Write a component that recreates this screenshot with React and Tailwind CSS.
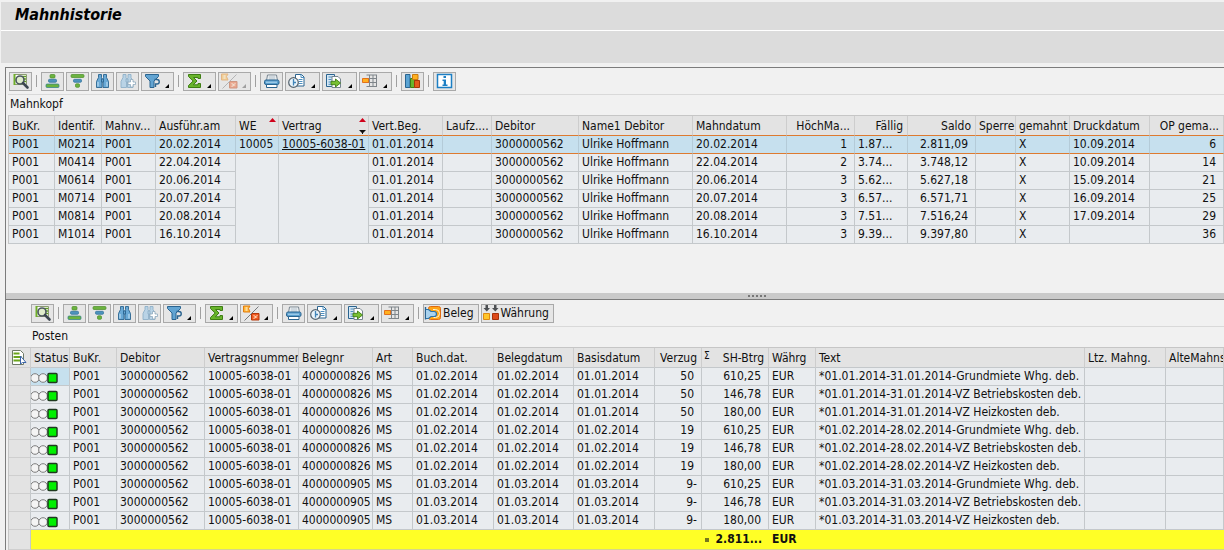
import clsx from "clsx";

const headers = [
  { label: "BuKr.", width: "w-[46px]" },
  { label: "Identif.", width: "w-[47px]" },
  { label: "Mahnv...", width: "w-[54px]" },
  { label: "Ausführ.am", width: "w-[80px]" },
  { label: "WE", width: "w-[43px]", sort: "up" },
  { label: "Vertrag", width: "w-[90px]", sort: "both" },
  { label: "Vert.Beg.", width: "w-[74px]" },
  { label: "Laufz....", width: "w-[49px]" },
  { label: "Debitor", width: "w-[87px]" },
  { label: "Name1 Debitor", width: "w-[114px]" },
  { label: "Mahndatum", width: "w-[94px]" },
  { label: "HöchMa...", width: "w-[68px]", right: true },
  { label: "Fällig", width: "w-[53px]", right: true },
  { label: "Saldo", width: "w-[68px]", right: true },
  { label: "Sperre", width: "w-[40px]" },
  { label: "gemahnt", width: "w-[54px]" },
  { label: "Druckdatum", width: "w-[80px]" },
  { label: "OP gema...", width: "w-auto", right: true },
];

const dunnings = [
  { id: "M0214", date: "20.02.2014", level: 1, due: "1.87...", saldo: "2.811,09", printed: "10.09.2014", items: 6 },
  { id: "M0414", date: "22.04.2014", level: 2, due: "3.74...", saldo: "3.748,12", printed: "10.09.2014", items: 14 },
  { id: "M0614", date: "20.06.2014", level: 3, due: "5.62...", saldo: "5.627,18", printed: "15.09.2014", items: 21 },
  { id: "M0714", date: "20.07.2014", level: 3, due: "6.57...", saldo: "6.571,71", printed: "16.09.2014", items: 25 },
  { id: "M0814", date: "20.08.2014", level: 3, due: "7.51...", saldo: "7.516,24", printed: "17.09.2014", items: 29 },
  { id: "M1014", date: "16.10.2014", level: 3, due: "9.39...", saldo: "9.397,80", printed: "", items: 36 },
];

const itemHeaders = [
  { label: "Status", width: "w-[39px]" },
  { label: "BuKr.", width: "w-[47px]" },
  { label: "Debitor", width: "w-[88px]" },
  { label: "Vertragsnummer", width: "w-[94px]" },
  { label: "Belegnr", width: "w-[74px]" },
  { label: "Art", width: "w-[40px]" },
  { label: "Buch.dat.", width: "w-[81px]" },
  { label: "Belegdatum", width: "w-[80px]" },
  { label: "Basisdatum", width: "w-[81px]" },
  { label: "Verzug", width: "w-[47px]", right: true },
  { label: "SH-Btrg", width: "w-[67px]", right: true, sum: true },
  { label: "Währg", width: "w-[47px]" },
  { label: "Text", width: "w-[269px]" },
  { label: "Ltz. Mahng.", width: "w-[81px]" },
  { label: "AlteMahnst", width: "w-auto" },
];

const months = [
  { doc: "4000000826", posted: "01.02.2014", base: "01.01.2014", delay: "50", period: "*01.01.2014-31.01.2014" },
  { doc: "4000000826", posted: "01.02.2014", base: "01.02.2014", delay: "19", period: "*01.02.2014-28.02.2014" },
  { doc: "4000000905", posted: "01.03.2014", base: "01.03.2014", delay: "9-", period: "*01.03.2014-31.03.2014" },
];

const charges = [
  { amount: "610,25", text: "Grundmiete Whg. deb." },
  { amount: "146,78", text: "VZ Betriebskosten deb." },
  { amount: "180,00", text: "VZ Heizkosten deb." },
];

const items = months.flatMap((month) => charges.map((charge) => ({ ...month, ...charge })));

const icons = {
  details: (
    <>
      <path d="M4.5 1.5h12v10h-12z" fill="#fff" stroke="#8a9a70" />
      <path d="M12 3.5h4M13 6h3M13 8.5h3" stroke="#5fa01e" strokeWidth="1.6" />
      <path d="M4.5 1v11" stroke="#6fae2a" strokeWidth="2" />
      <circle cx="10" cy="7" r="4" fill="#dfeccb" stroke="#4b5660" strokeWidth="1.6" />
      <path d="M13 10l4.5 4.5" stroke="#3c4650" strokeWidth="2.6" strokeLinecap="round" />
    </>
  ),
  sortUp: (
    <>
      <rect x="8" y="1.5" width="5" height="3.5" rx="1" fill="#6cb33f" stroke="#4a8c2a" strokeWidth=".7" />
      <rect x="6.5" y="6.3" width="8" height="3" rx="1" fill="#4d93bd" stroke="#2d6f99" strokeWidth=".7" />
      <rect x="4" y="11" width="13" height="3.5" rx="1" fill="#6cb33f" stroke="#2d7d8c" strokeWidth=".7" />
    </>
  ),
  sortDown: (
    <>
      <rect x="4" y="1.5" width="13" height="3" rx="1" fill="#6cb33f" stroke="#4a8c2a" strokeWidth=".7" />
      <rect x="6.5" y="6.3" width="8" height="3" rx="1" fill="#4d93bd" stroke="#2d6f99" strokeWidth=".7" />
      <rect x="8.5" y="10.8" width="4" height="3.5" rx="1" fill="#6cb33f" stroke="#4a8c2a" strokeWidth=".7" />
    </>
  ),
  find: (
    <g stroke="#2a6490" strokeWidth=".9" fill="#69a9d6">
      <path d="M6.500 1.500h3v3l.5 1.500v8.500h-5.500v-6l2-4z" />
      <path d="M11.500 1.500h3v3l2 4v6h-5.500v-8.500l.5-1.500z" />
      <path d="M9.500 6h2v3h-2z" />
      <path d="M6 9v4.500M15 9v4.500" stroke="#b9dcf2" strokeWidth="1.2" />
    </g>
  ),
  findNext: (
    <>
      <g stroke="#8fb0c8" strokeWidth=".9" fill="#b9d3e6">
        <path d="M6 1.500h3v3l.5 1.500v8.500h-5.500v-6l2-4z" />
        <path d="M11 1.500h3v3l2 4v6h-5.500v-8.500l.5-1.500z" />
        <path d="M9 6h2v3h-2z" />
      </g>
      <path d="M13.500 6.500h2.500v2.500h2.500v2.500h-2.500v2.500h-2.500v-2.500h-2.500v-2.500h2.500z" fill="#fff" stroke="#8fa9bd" strokeWidth=".8" />
    </>
  ),
  filter: (
    <>
      <path d="M3.500 1.500h13v2l-4.500 4.500v6.500h-4v-6.500l-4.500-4.500z" fill="#62a4d2" stroke="#2a6490" />
      <path d="M12.500 6.500h2.500a2 2 0 010 4.500h-1.500v3" fill="none" stroke="#2a6490" strokeWidth="1.4" />
    </>
  ),
  sum: (
    <path d="M4.500 1.500h12v4h-2.500v-1h-4.500l3.500 3.500-3.700 3.800h4.700v-1.300h2.500v4h-12v-2l4.700-4.500-4.700-4.500z" fill="#69b52c" stroke="#3e7d14" />
  ),
  subtotal: (
    <>
      <path d="M2.500 1h6.500l-1.500 2.500 1.500 3.500h-6.500z" fill="#ffb534" stroke="#e07c10" />
      <path d="M4.500 3h2M4.500 5h2" stroke="#fff" strokeWidth="1.1" />
      <path d="M10.500 8.500h7.500v6.500h-7.500z" fill="#f05a22" stroke="#b5380b" />
      <path d="M12.500 10.500l3 1.500-3 1.500M15.500 10.500h1" stroke="#ffd9b8" strokeWidth="1.1" />
      <path d="M3.500 15.500L17.500 1.500" stroke="#77797c" />
    </>
  ),
  print: (
    <>
      <path d="M6.500 2h9l1 6h-11z" fill="#fff" stroke="#76848f" />
      <path d="M7.500 4h7M7.500 6h7" stroke="#9fb0bd" />
      <rect x="3.500" y="7" width="14.500" height="4.500" rx="1.500" fill="#5a9fce" stroke="#2a6490" />
      <path d="M5.500 11.500h10.500v3h-10.500z" fill="#fff" stroke="#2a6490" />
      <path d="M5 9.200h11" stroke="#b9dcf2" />
    </>
  ),
  views: (
    <>
      <path d="M9.500 1.500h6l2.500 2.500v9h-8.500z" fill="#fff" stroke="#2a6490" />
      <path d="M15 1.500v3h3M12.500 6.500h4M12.500 8.500h4M12.500 10.500h4" fill="none" stroke="#4d8fc0" />
      <circle cx="7.500" cy="9.500" r="4.800" fill="#e9f3fa" stroke="#55636e" strokeWidth="1.2" />
      <path d="M7.500 6v6.500M7.500 9.500h2.500" stroke="#3f84b8" strokeWidth="1.3" />
    </>
  ),
  exportFile: (
    <>
      <path d="M3.500 1.500h8v12h-8z" fill="#d5e7f4" stroke="#2a6490" />
      <path d="M5.500 4h4M5.500 6.500h3M5.500 9h3M5.500 11.300h3" stroke="#4d8fc0" />
      <path d="M9 3.500h6l2.500 2.500v8.500h-8.500z" fill="#fff" stroke="#76848f" />
      <path d="M8 8.300h4.500v-2.300l5 4-5 4v-2.300h-4.500z" fill="#78c032" stroke="#3e7d14" strokeWidth=".9" />
    </>
  ),
  layout: (
    <>
      <path d="M6.500 2h10.500M6.500 5.500h10.500M6.500 9.500h10.500M6.500 13.500h10.500M9.500 2v12M13 2v12M16.500 2v12" stroke="#7f858a" />
      <path d="M2.500 5.500h6v4h-6z" fill="#ffb01f" stroke="#e3701a" />
    </>
  ),
  chart: (
    <>
      <path d="M3.500 1.500h4.500v13h-4.500z" fill="#5aa3d3" stroke="#2a6490" />
      <path d="M8.500 5.500h4v9h-4z" fill="#69b52c" stroke="#3e7d14" />
      <path d="M10.500 1.500h5.500v5h-5.500z" fill="#ffb01f" stroke="#c97a10" />
      <path d="M12.500 7.500h5v7h-5z" fill="#e35b1c" stroke="#a83808" />
    </>
  ),
  info: (
    <>
      <path d="M3.500 1.500h14v13h-14z" fill="#fff" stroke="#1d7fc4" strokeWidth="1.5" />
      <path d="M9.500 3h2.500v2h-2.500zM8.500 6.500h3.500v5h1.500v1.500h-5v-1.500h1.200v-3.500h-1.200z" fill="#1d7fc4" />
    </>
  ),
  document: (
    <>
      <rect x="4.500" y="1.500" width="12" height="13" rx="2" fill="#ffa516" stroke="#e06a10" />
      <path d="M1.500 2v12.500" stroke="#2a6490" strokeWidth="1.4" />
      <path d="M2 4.500h2.500l2.500 2h3a2.500 2.500 0 010 5h-3l-2.500 2h-2.500" fill="#a9d2ee" stroke="#2a73ab" strokeWidth="1.2" />
      <path d="M9 4.500h2.500a3.500 3.500 0 010 8h-2" fill="none" stroke="#fff2d0" />
    </>
  ),
  currency: (
    <>
      <path d="M3.500 0h2.500v3h2l-3.200 3.500-3.300-3.500h2zM12 0h2.500v3h2l-3.200 3.500-3.300-3.500h2z" fill="#4c4f52" />
      <path d="M1.500 8.500h6v6h-6z" fill="#ffc52b" stroke="#e08a10" />
      <path d="M10.500 8.500h6v6h-6z" fill="#dd4a1a" stroke="#a5300a" />
    </>
  ),
};

function Icon({ name }) {
  return (
    <svg className="w-[21px] h-[17px] shrink-0" viewBox="0 0 21 17" fill="none" aria-hidden="true">
      {icons[name]}
    </svg>
  );
}

function ToolButton({ icon, label, text, menu, wide, disabled }) {
  return (
    <button
      type="button"
      aria-label={label}
      disabled={disabled}
      className={clsx(
        "relative flex items-center h-[19px] border border-[#a9a9a9] bg-[#e6e6e6]",
        !menu && !text && "w-[23px]",
        menu && (wide ? "w-[35px]" : "w-[33px]"),
        text && "pr-1"
      )}
    >
      <span className={clsx("flex", disabled && "opacity-45")}>
        <Icon name={icon} />
      </span>
      {text && <span className="-ml-0.5 whitespace-nowrap">{text}</span>}
      {menu && (
        <svg className={clsx("absolute right-1 bottom-0.5 size-1", disabled && "opacity-30")} viewBox="0 0 4 4" aria-hidden="true">
          <path d="M4 0v4H0z" fill="#000" />
        </svg>
      )}
    </button>
  );
}

function Separator() {
  return (
    <span className="flex justify-center w-[5px]">
      <span className="w-px h-3 bg-[#a0a0a0]" />
    </span>
  );
}

function Toolbar({ subtotalOff, className, children }) {
  return (
    <div className={clsx("flex items-center gap-0.5 h-[27px] border-b border-[#d9d9d9]", className)}>
      <ToolButton icon="details" label="Details" />
      <Separator />
      <ToolButton icon="sortUp" label="Aufsteigend sortieren" />
      <ToolButton icon="sortDown" label="Absteigend sortieren" />
      <ToolButton icon="find" label="Suchen" />
      <ToolButton icon="findNext" label="Weitersuchen" />
      <ToolButton icon="filter" label="Filter" menu />
      <Separator />
      <ToolButton icon="sum" label="Summe" menu />
      <ToolButton icon="subtotal" label="Zwischensumme" menu disabled={subtotalOff} />
      <Separator />
      <ToolButton icon="print" label="Drucken" />
      <ToolButton icon="views" label="Sichten" menu wide />
      <ToolButton icon="exportFile" label="Exportieren" menu wide />
      <ToolButton icon="layout" label="Layout" menu />
      <Separator />
      {children}
    </div>
  );
}

function HeadCell({ col, line }) {
  return (
    <th
      scope="col"
      className={clsx(
        "relative h-5 pt-px border-r border-r-[#cdcdcd] border-b bg-[#e3e3e3] font-normal overflow-hidden",
        line,
        col.right ? "pr-1 text-right" : "pl-[3px] text-left"
      )}
    >
      {col.sum && <span className="absolute left-0.5 top-0.5 text-[10px] leading-3">Σ</span>}
      {col.label}
      {col.sort && (
        <svg className="absolute right-0.5 top-0.5 w-[7px] h-4" viewBox="0 0 7 16" aria-hidden="true">
          <path d="M3.500 0L7 4H0z" fill="#d0021b" />
          {col.sort === "both" && <path d="M0 12h7L4 15v1H3v-1z" fill="#111" />}
        </svg>
      )}
    </th>
  );
}

function Cell({ children, right, className, ...rest }) {
  return (
    <td className={clsx("h-[18px] border-r border-b", right ? "pr-[7px] text-right" : "pl-[3px]", className)} {...rest}>
      {children}
    </td>
  );
}

function DunningTable() {
  return (
    <table className="w-full table-fixed border-separate border-spacing-0 border-t border-l border-[#c6c6c6] whitespace-nowrap">
      <colgroup>
        {headers.map((col) => (
          <col key={col.label} className={col.width} />
        ))}
      </colgroup>
      <thead>
        <tr>
          {headers.map((col) => (
            <HeadCell key={col.label} col={col} line="border-b-[#dd7a30]" />
          ))}
        </tr>
      </thead>
      <tbody>
        {dunnings.map((row, i) => {
          const look =
            i === 0 ? "bg-[#c6e0ee] border-r-[#b4cbd8] border-b-[#dd7a30]" : "bg-[#e9ecef] border-[#c4c8cb]";
          return (
            <tr key={row.id}>
              <Cell className={look}>P001</Cell>
              <Cell className={look}>{row.id}</Cell>
              <Cell className={look}>P001</Cell>
              <Cell className={look}>{row.date}</Cell>
              {i === 0 && (
                <>
                  <Cell className={look}>10005</Cell>
                  <Cell className={look}>
                    <a href="#vertrag" className="underline">10005-6038-01</a>
                  </Cell>
                </>
              )}
              {i === 1 && (
                <>
                  <Cell className={look} rowSpan={5} />
                  <Cell className={look} rowSpan={5} />
                </>
              )}
              <Cell className={look}>01.01.2014</Cell>
              <Cell className={look} />
              <Cell className={look}>3000000562</Cell>
              <Cell className={look}>Ulrike Hoffmann</Cell>
              <Cell className={look}>{row.date}</Cell>
              <Cell className={look} right>{row.level}</Cell>
              <Cell className={look}>{row.due}</Cell>
              <Cell className={look} right>{row.saldo}</Cell>
              <Cell className={look} />
              <Cell className={look}>X</Cell>
              <Cell className={look}>{row.printed}</Cell>
              <Cell className={look} right>{row.items}</Cell>
            </tr>
          );
        })}
      </tbody>
    </table>
  );
}

function TrafficLight() {
  return (
    <svg className="block w-[27px] h-4" viewBox="0 0 27 16" role="img" aria-label="Grün">
      <circle cx="4" cy="9" r="4.300" fill="#f4f4f4" stroke="#7d7d7d" />
      <circle cx="12" cy="9" r="4.300" fill="#f4f4f4" stroke="#7d7d7d" />
      <rect x="17" y="4.500" width="9" height="9" rx="1" fill="#00f000" stroke="#1f3a1f" strokeWidth="1.5" />
    </svg>
  );
}

function ItemTable() {
  const look = "bg-[#e9ecef] border-[#c4c8cb]";
  const side = "h-[18px] bg-[#e3e3e3] border-r border-b border-r-[#c4c8cb] border-b-[#cfcfcf]";
  const total = "h-5 pl-[3px] bg-[#ffff26] border-b border-[#d5d58a]";
  return (
    <table className="w-full table-fixed border-separate border-spacing-0 border-t border-l border-[#c6c6c6] whitespace-nowrap">
      <colgroup>
        <col className="w-[22px]" />
        {itemHeaders.map((col) => (
          <col key={col.label} className={col.width} />
        ))}
      </colgroup>
      <thead>
        <tr>
          <td className="border-r border-b border-r-[#cdcdcd] border-b-[#cfcfcf] bg-[#e3e3e3]">
            <button type="button" aria-label="Alle markieren" className="block ml-0.5">
              <svg className="w-4 h-[17px]" viewBox="0 0 16 17" fill="none" aria-hidden="true">
                <path d="M1.500 1.500h8l3 3v11h-11z" fill="#fff" stroke="#6e7a66" />
                <path d="M2.500 4.500h6M2.500 8h8M2.500 11.500h7" stroke="#6aa51c" strokeWidth="2.2" />
                <path d="M9.500 7v8l2-1.500h3.500z" fill="#fff" stroke="#3a63a8" />
              </svg>
            </button>
          </td>
          {itemHeaders.map((col) => (
            <HeadCell key={col.label} col={col} line="border-b-[#c4c8cb]" />
          ))}
        </tr>
      </thead>
      <tbody>
        {items.map((row, i) => (
          <tr key={i}>
            <td className={side} />
            <td className={clsx("h-[18px] border-r border-b border-[#c4c8cb]", i === 0 ? "bg-[#c6e0ee]" : "bg-[#e9ecef]")}>
              <TrafficLight />
            </td>
            <Cell className={look}>P001</Cell>
            <Cell className={look}>3000000562</Cell>
            <Cell className={look}>10005-6038-01</Cell>
            <Cell className={look}>{row.doc}</Cell>
            <Cell className={look}>MS</Cell>
            <Cell className={look}>{row.posted}</Cell>
            <Cell className={look}>{row.posted}</Cell>
            <Cell className={look}>{row.base}</Cell>
            {/* a trailing minus hangs outside the digit column */}
            <td className={clsx("h-[18px] border-r border-b text-right", look, row.delay.endsWith("-") ? "pr-1" : "pr-[7px]")}>
              {row.delay}
            </td>
            <Cell className={look} right>{row.amount}</Cell>
            <Cell className={look}>EUR</Cell>
            <Cell className={look}>{row.period}-{row.text}</Cell>
            <Cell className={look} />
            <Cell className={look} />
          </tr>
        ))}
      </tbody>
      <tfoot className="font-bold">
        <tr>
          <td className={side} />
          <td className={total} colSpan={10} />
          <td className={total}>
            <div className="flex items-center justify-between pr-[7px]">
              <span className="size-1 bg-[#77771c]" />
              2.811...
            </div>
          </td>
          <td className={total}>EUR</td>
          <td className={total} colSpan={3} />
        </tr>
      </tfoot>
    </table>
  );
}

export default function App() {
  return (
    <div className="h-screen flex flex-col overflow-hidden bg-[#f1f1f1] text-[12px] leading-[17px] text-[#111] font-['DejaVu_Sans_Condensed','DejaVu_Sans',sans-serif]">
      <header className="pt-0.5 pl-px">
        <h1 className="h-[29px] pl-3.5 pt-[3px] bg-[#dcdcdc] border-b border-white text-base leading-[19px] font-bold italic text-black">
          Mahnhistorie
        </h1>
        <div className="h-8 bg-[#dcdcdc]" />
      </header>

      <main className="flex-1 min-h-0 flex flex-col mt-1 ml-[5px] border-t border-l border-[#7c7c7c]">
        <section aria-label="Mahnkopf" className="h-[225px] shrink-0 pl-0.5">
          <Toolbar subtotalOff className="pl-px">
            <ToolButton icon="chart" label="Grafik" />
            <Separator />
            <ToolButton icon="info" label="Information" />
          </Toolbar>
          <h2 className="h-5 pl-0.5 pt-px">Mahnkopf</h2>
          <DunningTable />
        </section>

        <div role="separator" aria-label="Bereiche teilen" className="h-[7px] shrink-0 flex items-center justify-center gap-0.5 pl-[284px] bg-[#cacaca] border-b border-[#7c7c7c]">
          {[0, 1, 2, 3, 4].map((dot) => (
            <span key={dot} className="size-0.5 bg-[#777]" />
          ))}
        </div>

        <section aria-label="Posten" className="pl-0.5">
          <Toolbar className="pl-[23px]">
            <ToolButton icon="document" text="Beleg" />
            <ToolButton icon="currency" text="Währung" />
          </Toolbar>
          <h2 className="h-5 pl-6 pt-px">Posten</h2>
          <ItemTable />
        </section>
      </main>
    </div>
  );
}
